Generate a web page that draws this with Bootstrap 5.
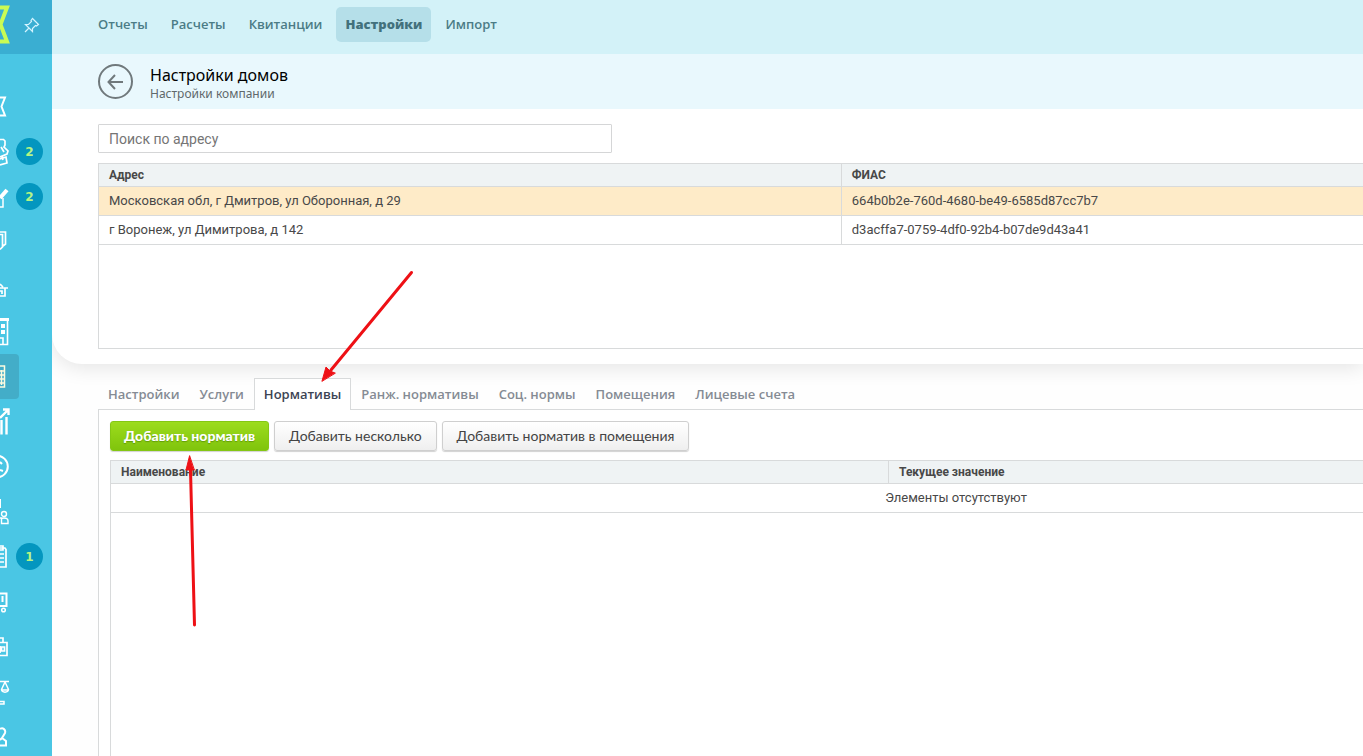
<!DOCTYPE html>
<html lang="ru">
<head>
<meta charset="utf-8">
<meta name="viewport" content="width=device-width, initial-scale=1">
<title>Настройки домов</title>
<link href="https://cdn.jsdelivr.net/npm/bootstrap@5.3.0/dist/css/bootstrap.min.css" rel="stylesheet">
<style>
  body { font-family: Roboto, "Noto Sans", sans-serif; font-size: 13px; line-height: 18px; color: #484848; background: #fff; }
  .side { width: 52px; background: #4ac6e4; }
  .side-top { height: 54px; background: #3aaed2; }
  .side-menu { margin-top: 30px; }
  .side-item { height: 45px; width: 19px; color: #fff; }
  .side-item.active { background: #43adc8; border-radius: 0 4px 4px 0; color: #fdfbe0; }
  .side-item svg, .side-top svg { display: block; fill: none; stroke: currentColor; stroke-width: 2; }
  .counter { left: 16px; top: 9px; width: 27px; height: 27px; background: #0496bf; color: #b5f584; font: bold 12px/28px "DejaVu Sans", sans-serif; }
  .topbar { height: 54px; padding: 7px 37px; background: #d3f2f8; gap: 5px; }
  .topbar .nav-link { padding: 0 9px; font: 600 13px/35px "Open Sans", sans-serif; color: #4b7c86; border-radius: 5px; }
  .topbar .nav-link.active { background: #b5dfe9; color: #42717c; font-weight: 800; }
  .subbar { height: 55px; padding: 0 46px; gap: 17px; background: #e9f8fd; z-index: 1; }
  .back { width: 35px; height: 35px; border: 2px solid #70797c; color: #70797c; background: none; }
  .subbar h1 { font: 400 16px/20px "Noto Sans", sans-serif; color: #000; }
  .subbar a { font: 12px/17px "Noto Sans", sans-serif; color: #60686b; }
  .lower { background: #fefefe; }
  .upper { height: 255px; padding: 15px 0 15px 46px; gap: 10px; background: #fff; border-bottom-left-radius: 30px; box-shadow: 0 4px 20px rgba(0,0,0,.1); }
  .search { width: 514px; height: 29px; padding: 0 10px; border: 1px solid #d5d6d7; border-radius: 1px; font-size: 14px; }
  .search::placeholder { color: #757575; }
  .gridbox { border: 1px solid #d8dadb; border-right: 0; background: #fff; }
  .data { width: 135%; margin: 0; table-layout: fixed; }
  .data th, .data td { padding: 0 10px; height: 29px; border: 0 solid #d8dadb; border-bottom-width: 1px; color: #484848; }
  .data th { height: 22px; background: #eff3f4; font-size: 12px; font-weight: 700; }
  .data th + th, .data td + td { border-left-width: 1px; }
  .data .chosen td { background: #feebc8; }
  .col-address { width: 43.5%; }
  .col-name { width: 46%; }
  .details { padding-left: 46px; }
  .sections { padding: 14px 0 0; border: 0; margin-bottom: -1px; position: relative; }
  .sections .nav-link { padding: 0 9px; border: 1px solid transparent; border-bottom: 0; border-radius: 0; font: 600 13px/31px "Open Sans", sans-serif; color: #858b94; margin: 0; }
  .sections .nav-link.active { color: #3c4454; background: #fff; border-color: #d8dadb; }
  .workspace { border: 1px solid #d8dadb; border-width: 1px 0 0 1px; padding: 11px 0 0 11px; background: #fff; }
  .tools { gap: 5px; margin-bottom: 9px; }
  .tools .btn { height: 30px; padding: 0 14px; font: 14px/28px Lato, sans-serif; border: 1px solid #cfcfcf; border-radius: 3px; color: #444; background: linear-gradient(#fff, #efefef); box-shadow: 0 1px 1px rgba(0,0,0,.18); }
  .tools .btn-add { padding: 0 13px; background: linear-gradient(#9cdc1d, #80c40c); border-color: #84c714; color: #fff; font-weight: 900; text-shadow: 0 1px 1px rgba(60,110,0,.5); }
  .notes { width: 100%; height: 100%; pointer-events: none; z-index: 5; }
</style>
</head>
<body class="d-flex vh-100 overflow-hidden">
<aside class="side flex-shrink-0 vh-100 overflow-hidden">
  <div class="side-top">
    <svg width="52" height="54">
      <path d="M-2 7.500H7L.5 24.500 7 41.500H-2" stroke="#c9fb55" stroke-width="4"/>
      <path d="M32.500 18.500L38.500 24.500 36.500 26 35.500 25.500 32.500 28.500 32.500 31.500 25.500 24.500 28.500 24.500 31.500 21.500 31 20.500ZM29 28L25 32" stroke="#d4f4ff" stroke-width="1.200"/>
    </svg>
  </div>
  <nav class="side-menu d-flex flex-column" aria-label="Разделы">
    <a href="#" class="side-item position-relative"><svg width="19" height="45"><path d="M0 13.500H5L1.500 22.500 5 31.500H0" stroke-width="2"/></svg></a>
    <a href="#" class="side-item position-relative"><svg width="19" height="45"><path d="M0 10.500H3.500L5 12V16L4 18 8 22 7 25 0 28M2 28L3 31M0 30L6 28 7 34 0 36M1 18L4 23" stroke-width="1.700"/></svg><span class="counter position-absolute rounded-circle text-center">2</span></a>
    <a href="#" class="side-item position-relative"><svg width="19" height="45"><path d="M0 24L7 16" stroke-width="4"/><path d="M3 24V33H0" stroke-width="1.500"/></svg><span class="counter position-absolute rounded-circle text-center">2</span></a>
    <a href="#" class="side-item"><svg width="19" height="45"><path d="M0 13H5.500V25L3 27M0 15.500H2.500V28L0 30.500" stroke-width="1.700"/></svg></a>
    <a href="#" class="side-item"><svg width="19" height="45"><path d="M0 24H8M5 24V32H0M0 20L3 23M0 27H2V30" stroke-width="1.700"/></svg></a>
    <a href="#" class="side-item"><svg width="19" height="45"><path d="M0 10.500H9" stroke-width="3"/><path d="M7.500 11V35.500H0M3 35V29H0" stroke-width="1.600"/><path d="M1 15h4v4h-4zM1 21h4v4h-4z" fill="currentColor" stroke="none"/></svg></a>
    <a href="#" class="side-item active"><svg width="19" height="45"><path d="M0 12H4.500V33H0M0 17H4M0 21H4M0 25H4M0 29H4M1.500 16V31" stroke-width="1.500"/></svg></a>
    <a href="#" class="side-item"><svg width="19" height="45"><path d="M0 19L8 11M3 10.500H8.500V16M6.500 18V35.500M1.500 21V35.500" stroke-width="2.400"/></svg></a>
    <a href="#" class="side-item"><svg width="19" height="45"><circle cx="-3" cy="22.500" r="10.800"/><path d="M0 18L2 20M0 26L3 27"/></svg></a>
    <a href="#" class="side-item"><svg width="19" height="45"><path d="M0 10V19"/><circle cx="4" cy="25" r="2.500" stroke-width="1.400"/><path d="M0 29H1.500V34.500H8V32C8 30 6 29 4 29S1.500 30 1.500 31" stroke-width="1.400"/></svg></a>
    <a href="#" class="side-item position-relative"><svg width="19" height="45"><path d="M0 14H5L6 15.500V33H0M0 12H3V16H0M0 20H4M0 24H4M0 28H4" stroke-width="1.700"/></svg><span class="counter position-absolute rounded-circle text-center">1</span></a>
    <a href="#" class="side-item"><svg width="19" height="45"><path d="M0 14.500H6.500V27H0M2.500 17V23" stroke-width="2"/><circle cx="3.500" cy="31" r="1.800" stroke-width="1.500"/></svg></a>
    <a href="#" class="side-item"><svg width="19" height="45"><path d="M0 18.500H7V31.500H0M0 14H3V18M1.500 23H4.500V27H1.500ZM0 22V29" stroke-width="1.700"/></svg></a>
    <a href="#" class="side-item"><svg width="19" height="45"><path d="M0 12.500H9M5 13L1.500 20.500C2 24 8 24 8.500 20.500L5 13M1.500 21H8.500M0 32.500H4V35H0" stroke-width="1.500"/></svg></a>
    <a href="#" class="side-item"><svg width="19" height="45"><path d="M0 15C3 13 6 16 5 19L2 24 6 27V31.500H0M0 26L2 24"/></svg></a>
  </nav>
</aside>

<main class="flex-grow-1 d-flex flex-column overflow-hidden">
  <nav class="topbar nav align-items-start flex-shrink-0" aria-label="Главное меню">
    <a class="nav-link" href="#">Отчеты</a>
    <a class="nav-link" href="#">Расчеты</a>
    <a class="nav-link" href="#">Квитанции</a>
    <a class="nav-link active" href="#" aria-current="page">Настройки</a>
    <a class="nav-link" href="#">Импорт</a>
  </nav>
  <header class="subbar position-relative d-flex align-items-center flex-shrink-0">
    <button type="button" class="back rounded-circle p-0 d-flex align-items-center justify-content-center" aria-label="Назад">
      <svg width="17" height="16" fill="none" stroke="currentColor" stroke-width="2"><path d="M16 8H2M8 1L1.500 8 8 15"/></svg>
    </button>
    <div class="pt-1">
      <h1 class="m-0">Настройки домов</h1>
      <a href="#" class="d-block text-decoration-none">Настройки компании</a>
    </div>
  </header>

  <div class="lower flex-grow-1 d-flex flex-column">
    <section class="upper d-flex flex-column flex-shrink-0">
      <input class="search flex-shrink-0" type="search" placeholder="Поиск по адресу" aria-label="Поиск по адресу">
      <div class="gridbox flex-grow-1 overflow-hidden">
        <table class="data">
          <colgroup><col class="col-address"><col></colgroup>
          <thead><tr><th scope="col">Адрес</th><th scope="col">ФИАС</th></tr></thead>
          <tbody>
            <tr class="chosen"><td>Московская обл, г Дмитров, ул Оборонная, д 29</td><td>664b0b2e-760d-4680-be49-6585d87cc7b7</td></tr>
            <tr><td>г Воронеж, ул Димитрова, д 142</td><td>d3acffa7-0759-4df0-92b4-b07de9d43a41</td></tr>
          </tbody>
        </table>
      </div>
    </section>

    <section class="details flex-grow-1 d-flex flex-column">
      <ul class="sections nav nav-tabs">
        <li class="nav-item"><a class="nav-link" href="#">Настройки</a></li>
        <li class="nav-item"><a class="nav-link" href="#">Услуги</a></li>
        <li class="nav-item"><a class="nav-link active" href="#" aria-current="true">Нормативы</a></li>
        <li class="nav-item"><a class="nav-link" href="#">Ранж. нормативы</a></li>
        <li class="nav-item"><a class="nav-link" href="#">Соц. нормы</a></li>
        <li class="nav-item"><a class="nav-link" href="#">Помещения</a></li>
        <li class="nav-item"><a class="nav-link" href="#">Лицевые счета</a></li>
      </ul>
      <div class="workspace flex-grow-1 d-flex flex-column">
        <div class="tools d-flex">
          <button type="button" class="btn btn-add">Добавить норматив</button>
          <button type="button" class="btn">Добавить несколько</button>
          <button type="button" class="btn">Добавить норматив в помещения</button>
        </div>
        <div class="gridbox border-bottom-0 flex-grow-1 overflow-hidden">
          <table class="data">
            <colgroup><col class="col-name"><col></colgroup>
            <thead><tr><th scope="col">Наименование</th><th scope="col">Текущее значение</th></tr></thead>
            <tbody><tr><td colspan="2" class="text-center">Элементы отсутствуют</td></tr></tbody>
          </table>
        </div>
      </div>
    </section>
  </div>
</main>

<svg class="notes position-absolute top-0 start-0" aria-hidden="true" stroke="#ee1015" stroke-width="3" stroke-linecap="round" fill="#ee1015">
  <path d="M411.500 272.500L331 370"/>
  <path d="M322 381L326 367 330 371 335 373Z" stroke-width="1"/>
  <path d="M194.500 625L190.500 470"/>
  <path d="M189.500 456L186 470H194Z" stroke-width="1"/>
</svg>
<script src="https://cdn.jsdelivr.net/npm/bootstrap@5.3.0/dist/js/bootstrap.bundle.min.js"></script>
</body>
</html>
